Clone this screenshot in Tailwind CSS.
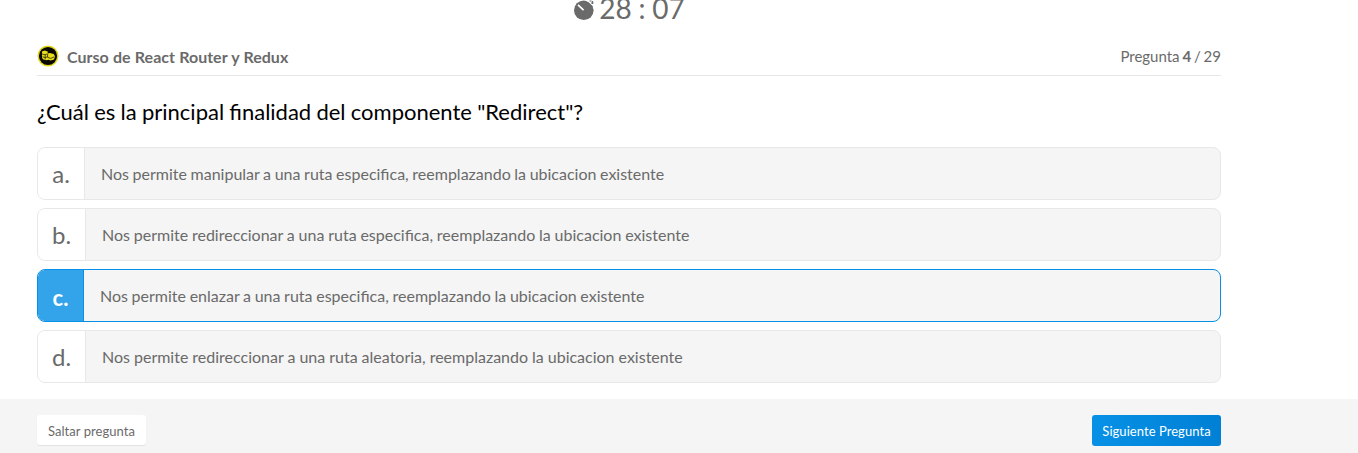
<!DOCTYPE html>
<html lang="es">
<head>
<meta charset="utf-8">
<title>Examen</title>
<script src="https://cdn.jsdelivr.net/npm/@tailwindcss/browser@4"></script>
</head>
<body class="w-[1358px] h-[453px] overflow-hidden bg-white font-['Lato',sans-serif] text-[#6a6a6a]">
<div class="h-[399px] pl-[37px] w-[1221px]">
  <div class="flex h-[38px] justify-center">
    <div class="flex h-5 items-start gap-1">
      <svg class="w-[22px] h-[21px] shrink-0" viewBox="0 0 22 21"><circle cx="10.8" cy="10.3" r="9.8" fill="#6a6a6a"/><path d="M5 4.8l5.6 5.4" stroke="#fff" stroke-width="1.7"/><path d="M12.5 0l3.5 1.6 3.2 3.2" fill="none" stroke="#fff" stroke-width="1.3"/><path d="M16.5 1h2M18 3h2.5M19.5 1v3" stroke="#6a6a6a" stroke-width="1.2"/></svg>
      <span class="-mt-[10px] text-[28px] leading-[36px] whitespace-pre [word-spacing:-0.4px]">28 : 07</span>
    </div>
  </div>
  <header class="flex h-[38px] items-center justify-between border-b border-[#e8e8e8]">
    <div class="flex items-center">
      <svg class="mb-0.5 w-[22px] h-[22px]" viewBox="0 0 22 22"><circle cx="11" cy="11" r="9.8" fill="#080800" stroke="#e3d71c" stroke-width="1.4"/><path d="M5 6.6L7.5 5.4l3.2 1v2.2l2-.6 4 1 1.3 2.3-1 3.2-3.2 1-2.4-.8-2 .6-3-.8L5 13z" fill="#e9dc1c"/><path d="M5 9l3 .8 2.4-1M5.4 11.8l3 .8 2-1M10.6 9v3.4l3.2 1 3.4-1.6M8.2 9.8v4.6" fill="none" stroke="#292600" stroke-width=".8"/></svg>
      <h2 class="ml-2 text-base font-bold [word-spacing:0.4px]">Curso de React Router y Redux</h2>
    </div>
    <span class="text-[15px] [word-spacing:-1px]">Pregunta <b>4</b> / 29</span>
  </header>
  <h1 class="h-[71px] pt-[20px] text-[22px] leading-8 text-black [word-spacing:-0.4px]">¿Cuál es la principal finalidad del componente "Redirect"?</h1>
  <div class="flex flex-col gap-2">
    <div class="flex h-[53px] overflow-hidden rounded-lg border border-[#e8e8e8] bg-[#f5f5f5]">
      <div class="flex w-[47px] shrink-0 items-center justify-center border-r border-[#e8e8e8] bg-white text-2xl">a.</div>
      <div class="flex items-center pl-4 text-base [word-spacing:-0.5px]">Nos permite manipular a una ruta especifica, reemplazando la ubicacion existente</div>
    </div>
    <div class="flex h-[53px] overflow-hidden rounded-lg border border-[#e8e8e8] bg-[#f5f5f5]">
      <div class="flex w-[48px] shrink-0 items-center justify-center border-r border-[#e8e8e8] bg-white text-2xl">b.</div>
      <div class="flex items-center pl-4 text-base [word-spacing:-0.3px]">Nos permite redireccionar a una ruta especifica, reemplazando la ubicacion existente</div>
    </div>
    <div class="flex h-[53px] overflow-hidden rounded-lg border border-[#0791e6] bg-[#f5f5f5]">
      <div class="flex w-[46px] shrink-0 items-center justify-center border-r border-[#0791e6] bg-[#33a3ea] pt-1 text-[22px] font-bold text-white">c.</div>
      <div class="flex items-center pl-4 text-base [word-spacing:-0.45px]">Nos permite enlazar a una ruta especifica, reemplazando la ubicacion existente</div>
    </div>
    <div class="flex h-[53px] overflow-hidden rounded-lg border border-[#e8e8e8] bg-[#f5f5f5]">
      <div class="flex w-[48px] shrink-0 items-center justify-center border-r border-[#e8e8e8] bg-white text-2xl">d.</div>
      <div class="flex items-center pl-4 text-base [word-spacing:-0.1px]">Nos permite redireccionar a una ruta aleatoria, reemplazando la ubicacion existente</div>
    </div>
  </div>
</div>
<footer class="h-[54px] bg-[#f5f5f5]">
  <div class="flex w-[1221px] justify-between pl-[37px] pt-4">
    <button class="h-[30px] w-[109px] rounded-[3px] bg-white pt-[3px] text-[13px] shadow-[0_1px_1px_rgba(0,0,0,0.08)]"><span class="tracking-[0.05px]">Saltar pregunta</span></button>
    <button class="h-[31px] w-[129px] rounded-[3px] bg-linear-to-r from-[#0791e6] to-[#0080d5] pt-0.5 text-[13px] text-white"><span class="tracking-[0.05px]">Siguiente Pregunta</span></button>
  </div>
</footer>
</body>
</html>
